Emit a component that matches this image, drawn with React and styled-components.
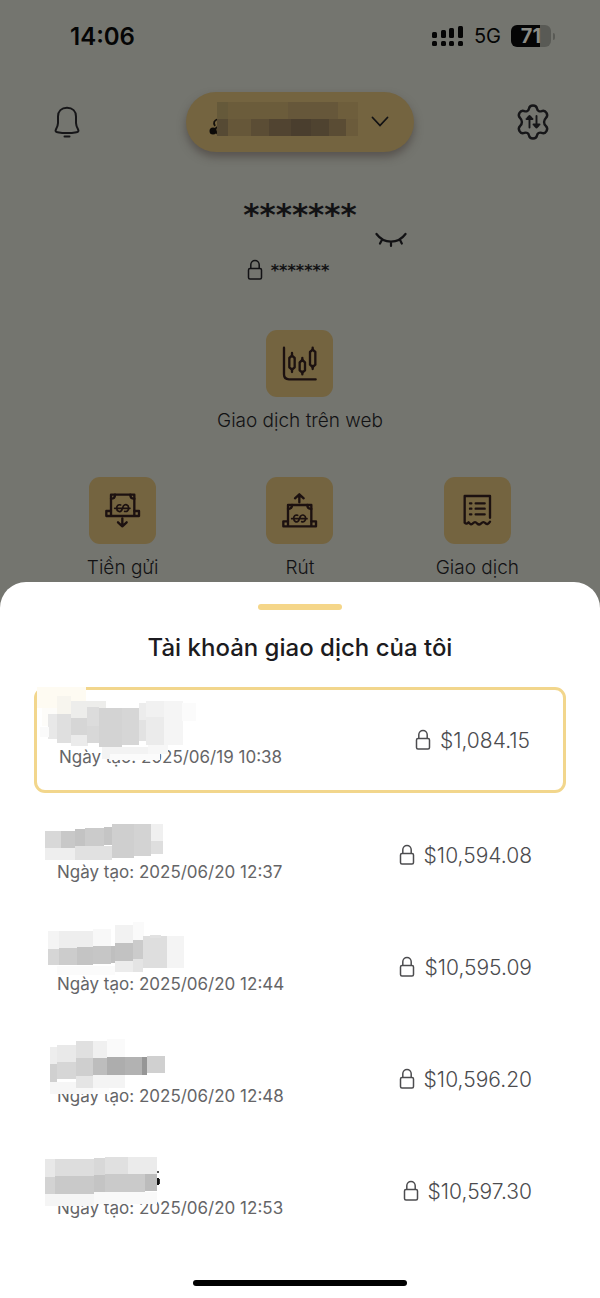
import React from 'react';
import styled, { createGlobalStyle } from 'styled-components';

const accounts = [
  {
    created: '2025/06/19 10:38',
    amount: '$1,084.15',
    selected: true,
    mask: {
      viewBox: '51 30 600 318',
      blocks: [
        [52, 22, 146, 62, '#fefbf2'],
        [66, 84, 50, 54, '#fdfcf9'],
        [112, 48, 42, 56, '#f7f5ee'],
        [154, 62, 104, 52, '#ededeb'],
        [84, 103, 30, 74, '#e8e8e8'],
        [60, 140, 26, 30, '#fafafa'],
        [112, 103, 42, 86, '#dfdfdf'],
        [154, 114, 50, 52, '#d6d6d6'],
        [154, 166, 50, 32, '#ebebeb'],
        [202, 82, 36, 56, '#dcdcdc'],
        [202, 138, 36, 50, '#d8d8d8'],
        [238, 84, 68, 116, '#d3d3d3'],
        [306, 84, 52, 110, '#d6d6d6'],
        [356, 70, 24, 50, '#ececec'],
        [356, 120, 24, 64, '#e2e2e2'],
        [378, 62, 54, 48, '#f1f1f1'],
        [378, 110, 54, 86, '#ebebeb'],
        [432, 62, 56, 134, '#f5f5f5'],
        [486, 68, 42, 54, '#fbfbfb'],
        [246, 200, 138, 36, '#f3f3f3'],
        [270, 222, 150, 18, '#fbfbfb'],
        [384, 196, 60, 26, '#f7f7f7'],
      ],
    },
  },
  {
    created: '2025/06/20 12:37',
    amount: '$10,594.08',
    mask: {
      viewBox: '12 -33 600 336',
      blocks: [
        [46, 63, 46, 50, '#d8d8d8'],
        [92, 63, 42, 51, '#c8c8c8'],
        [134, 58, 32, 53, '#c3c3c3'],
        [166, 54, 56, 54, '#cbcbcb'],
        [222, 50, 24, 54, '#c5c5c5'],
        [46, 113, 88, 38, '#eeeeee'],
        [134, 109, 112, 40, '#e1e1e1'],
        [246, 42, 66, 102, '#cfcfcf'],
        [312, 42, 50, 96, '#d3d3d3'],
        [362, 42, 38, 52, '#f0f0f0'],
        [362, 94, 38, 38, '#dedede'],
      ],
    },
  },
  {
    created: '2025/06/20 12:44',
    amount: '$10,595.09',
    mask: {
      viewBox: '12 303 600 336',
      blocks: [
        [54, 362, 34, 54, '#f4f4f4'],
        [88, 362, 102, 52, '#eeeeee'],
        [190, 356, 52, 52, '#f8f8f8'],
        [256, 346, 52, 54, '#f2f2f2'],
        [308, 336, 34, 54, '#fafafa'],
        [54, 416, 34, 50, '#d6d6d6'],
        [88, 413, 52, 52, '#cccccc'],
        [140, 412, 50, 52, '#c4c4c4'],
        [190, 408, 52, 54, '#c6c6c6'],
        [242, 408, 14, 52, '#bfbfbf'],
        [256, 400, 54, 52, '#c2c2c2'],
        [310, 391, 30, 56, '#cbcbcb'],
        [256, 452, 54, 34, '#ececec'],
        [310, 446, 30, 40, '#e4e4e4'],
        [340, 378, 70, 96, '#dedede'],
        [360, 374, 32, 10, '#e2e2e2'],
        [410, 377, 52, 96, '#f4f4f4'],
        [80, 468, 176, 26, '#fbfbfb'],
      ],
    },
  },
  {
    created: '2025/06/20 12:48',
    amount: '$10,596.20',
    mask: {
      viewBox: '12 -21 600 336',
      blocks: [
        [60, 51, 22, 52, '#ededed'],
        [82, 44, 56, 52, '#e9e9e9'],
        [138, 33, 50, 52, '#e0e0e0'],
        [188, 33, 44, 50, '#f0f0f0'],
        [232, 26, 54, 56, '#fafafa'],
        [60, 103, 22, 53, '#d0d0d0'],
        [82, 96, 56, 52, '#d6d6d6'],
        [138, 85, 50, 52, '#cfcfcf'],
        [188, 85, 44, 50, '#bdbdbd'],
        [232, 81, 54, 54, '#adadad'],
        [286, 81, 50, 54, '#b2b2b2'],
        [336, 81, 16, 54, '#969696'],
        [352, 77, 52, 53, '#d0d0d0'],
        [60, 156, 78, 36, '#f6f6f6'],
        [138, 137, 50, 38, '#e5e5e5'],
        [138, 175, 50, 16, '#f8f8f8'],
        [188, 135, 98, 38, '#f4f4f4'],
        [188, 173, 50, 18, '#fcfcfc'],
      ],
    },
  },
  {
    created: '2025/06/20 12:53',
    amount: '$10,597.30',
    mask: {
      viewBox: '12 315 600 336',
      blocks: [
        [46, 388, 30, 52, '#e8e8e8'],
        [76, 387, 116, 52, '#dddddd'],
        [192, 384, 34, 52, '#d8d8d8'],
        [226, 381, 68, 52, '#e0e0e0'],
        [294, 381, 88, 52, '#ebebeb'],
        [46, 440, 30, 52, '#d3d3d3'],
        [76, 439, 116, 52, '#c9c9c9'],
        [192, 436, 34, 52, '#c4c4c4'],
        [226, 432, 120, 54, '#cacaca'],
        [346, 432, 36, 52, '#bcbcbc'],
        [382, 423, 4, 6, '#555555'],
        [382, 444, 5, 22, '#111111'],
        [386, 448, 3, 14, '#333333'],
        [46, 492, 146, 36, '#f5f5f5'],
        [192, 487, 190, 34, '#f9f9f9'],
      ],
    },
  },
];

function Mask({ viewBox, blocks }) {
  return (
    <MaskLayer viewBox={viewBox} aria-hidden="true" shapeRendering="crispEdges">
      {blocks.map(([x, y, w, h, fill], i) => (
        <rect key={i} x={x} y={y} width={w} height={h} fill={fill} />
      ))}
    </MaskLayer>
  );
}

function LockIcon() {
  return (
    <svg width="16" height="22" viewBox="0 0 16 22" fill="none" stroke="currentColor" strokeWidth="1.5" aria-hidden="true">
      <rect x="1.5" y="9.5" width="13" height="10.5" rx="1.5" />
      <path d="M3.8 9.500V5.800a4.200 4.300 0 0 1 8.400 0V9.500" />
    </svg>
  );
}

function BellIcon() {
  return (
    <svg width="28" height="32" viewBox="0 0 28 32" fill="none" stroke="currentColor" strokeWidth="2" strokeLinecap="round" aria-hidden="true">
      <path d="M14 1.800C8.500 1.800 5 5.200 5 10.500V17c0 2.500-.8 4-2 6.200-1 1.800-.3 2.700 1.500 3 6 1.100 13 1.100 19 0 1.800-.3 2.500-1.200 1.500-3-1.200-2.200-2-3.700-2-6.200v-6.500c0-5.300-3.500-8.700-9-8.700Z" />
      <path d="M11.500 30.400h5" />
    </svg>
  );
}

function SettingsIcon() {
  return (
    <svg width="34" height="36" viewBox="0 0 34 36" fill="none" stroke="currentColor" strokeWidth="2.400" strokeLinecap="round" strokeLinejoin="round" aria-hidden="true">
      <path d="M13 4.500C13.400 2.300 14.500 1.500 17 1.500s3.600.8 4 3c.4 2.300 2.400 3.400 4.600 2.600 2.300-.9 3.600-.4 4.900 1.800s1.100 3.500-.7 5.200c-2.300 2.200-2.300 5.600 0 7.800 1.800 1.700 2 3 .7 5.200s-2.600 2.700-4.900 1.800c-2.200-.8-4.200.3-4.600 2.600-.4 2.200-1.500 3-4 3s-3.600-.8-4-3c-.4-2.300-2.400-3.400-4.600-2.600-2.300.9-3.600.4-4.900-1.800s-1.100-3.500.7-5.200c2.300-2.200 2.300-5.600 0-7.800-1.800-1.700-2-3-.7-5.200s2.600-2.700 4.900-1.800c2.200.8 4.200-.3 4.600-2.600Z" />
      <path d="M13.500 23.500V12M10.500 15h6M20.500 12v11.500M17.500 20.500h6M11.500 14l2-2 2 2M18.500 21.500l2 2 2-2" strokeWidth="1.900" />
    </svg>
  );
}

function EyeClosedIcon() {
  return (
    <svg width="32" height="16" viewBox="0 0 32 16" fill="none" stroke="currentColor" strokeWidth="2.200" strokeLinecap="round" aria-hidden="true">
      <path d="M1.500 2C9 12.200 23 12.200 30.500 2M7.200 7.500 5 11.500M16 9.800V14M24.800 7.500l2 4" />
    </svg>
  );
}

function SignalIcon() {
  return (
    <svg width="32" height="22" viewBox="0 0 32 22" fill="currentColor" aria-hidden="true">
      <rect x="0" y="7" width="5" height="6" rx="1.500" />
      <rect x="9" y="5" width="5" height="8" rx="1.500" />
      <rect x="17" y="3" width="5" height="10" rx="1.500" />
      <rect x="26" y="1" width="5" height="12" rx="1.500" />
      <rect x="0" y="16" width="5" height="5" rx="1.500" />
      <rect x="9" y="16" width="5" height="5" rx="1.500" />
      <rect x="17" y="16" width="5" height="5" rx="1.500" />
      <rect x="26" y="16" width="5" height="5" rx="1.500" />
    </svg>
  );
}

function ChartIcon() {
  return (
    <TileIcon viewBox="199 28 201 201">
      <path d="M253 81v80q0 15 15 15h80" />
      <path d="M277 97v8M277 145v9M308 112v7M308 153v8M339 81v7M339 136v9" />
      <path d="m277 105 8 7v28l-8 7-8-7v-28ZM308 118l8 7v24l-8 7-8-7v-24ZM339 87l8 7v38l-8 7-8-7V94Z" />
    </TileIcon>
  );
}

function Banknote() {
  return (
    <>
      <path d="M153 138V89h70v49" />
      <path d="M153 101q12 0 12-12M223 101q-12 0-12-12" />
      <path d="M153 138h-14v15h98v-15h-14M153 138v14M223 138v14" />
      <path d="M182 120c-7-3-12 3-12 9 0 10 9 14 15 7l5-13c6-7 16-4 16 6 0 7-5 12-12 10M164 130h46" strokeWidth="5" />
    </>
  );
}

function DepositIcon() {
  return (
    <TileIcon viewBox="87 36 201 201">
      <Banknote />
      <path d="M187 160v24M174 172l13 12 13-12" />
    </TileIcon>
  );
}

function WithdrawIcon() {
  return (
    <TileIcon viewBox="87 36 201 201">
      <g transform="translate(0 31)">
        <Banknote />
      </g>
      <path d="M187 112V88M174 100l13-12 13 12" />
    </TileIcon>
  );
}

function ReceiptIcon() {
  return (
    <TileIcon viewBox="133 36 201 201">
      <path d="M271 158V93h-76v80q6 6 12-1 7 10 13 3 6-7 12 0 7 7 13 0 6-7 13 0 6 6 13-5" />
      <path d="M211 115h4M228 115h27M211 131h4M228 131h27M211 148h4M228 148h27" />
    </TileIcon>
  );
}

function Action({ icon, label }) {
  return (
    <ActionButton type="button">
      <Tile>{icon}</Tile>
      <ActionLabel>{label}</ActionLabel>
    </ActionButton>
  );
}

function App() {
  return (
    <Screen>
      <GlobalStyle />
      <StatusBar>
        <Clock>14:06</Clock>
        <StatusIcons>
          <SignalIcon />
          <Network>5G</Network>
          <Battery>
            <BatteryBody>71</BatteryBody>
            <BatteryTip />
          </Battery>
        </StatusIcons>
      </StatusBar>

      <Header>
        <IconButton type="button" aria-label="Thông báo"><BellIcon /></IconButton>
        <AccountPicker type="button" aria-label="Chọn tài khoản">
          <svg width="150" height="42" viewBox="0 0 150 42" aria-hidden="true">
            <g fill="none" stroke="#14100c" strokeWidth="1.8">
              <path d="M9 18q-6 2-3 7M8 26q-4 3 1 7" />
            </g>
            <circle cx="4" cy="30" r="3.500" fill="#0c0a08" />
            <g shapeRendering="crispEdges">
              <rect x="8" y="1" width="11" height="17" fill="#65593a" />
              <rect x="19" y="1" width="60" height="17" fill="#6b5c3b" />
              <rect x="79" y="1" width="50" height="17" fill="#66573a" />
              <rect x="129" y="1" width="20" height="17" fill="#6e5e3c" />
              <rect x="8" y="18" width="11" height="17" fill="#564a34" />
              <rect x="19" y="18" width="23" height="17" fill="#665739" />
              <rect x="42" y="18" width="18" height="17" fill="#5b4d35" />
              <rect x="60" y="18" width="22" height="17" fill="#514431" />
              <rect x="82" y="18" width="20" height="17" fill="#4a3e2e" />
              <rect x="102" y="18" width="18" height="17" fill="#4f4330" />
              <rect x="120" y="18" width="17" height="17" fill="#5a4c34" />
              <rect x="137" y="18" width="12" height="17" fill="#6b5b3b" />
            </g>
          </svg>
          <svg width="18" height="12" viewBox="0 0 18 12" fill="none" stroke="currentColor" strokeWidth="1.8" strokeLinecap="round" aria-hidden="true">
            <path d="m1.500 1.500 7.500 8 7.500-8" />
          </svg>
        </AccountPicker>
        <IconButton type="button" aria-label="Cài đặt"><SettingsIcon /></IconButton>
      </Header>

      <Balance>
        <BalanceTotal>*******</BalanceTotal>
        <EyeButton type="button" aria-label="Hiện số dư"><EyeClosedIcon /></EyeButton>
        <BalanceLocked>
          <LockIcon />
          <LockedStars>*******</LockedStars>
        </BalanceLocked>
      </Balance>

      <Actions>
        <WideAction>
          <Action icon={<ChartIcon />} label="Giao dịch trên web" />
        </WideAction>
        <Action icon={<DepositIcon />} label="Tiền gửi" />
        <Action icon={<WithdrawIcon />} label="Rút" />
        <Action icon={<ReceiptIcon />} label="Giao dịch" />
      </Actions>

      <Sheet>
        <Handle />
        <Title>Tài khoản giao dịch của tôi</Title>
        <AccountList>
          {accounts.map((account) => (
            <li key={account.created}>
              <AccountRow type="button" $selected={account.selected}>
                <AccountInfo>
                  <AccountDate>Ngày tạo: {account.created}</AccountDate>
                </AccountInfo>
                <Amount>
                  <LockIcon />
                  {account.amount}
                </Amount>
                <Mask {...account.mask} />
              </AccountRow>
            </li>
          ))}
        </AccountList>
        <HomeIndicator />
      </Sheet>
    </Screen>
  );
}

const GlobalStyle = createGlobalStyle`
  * {
    box-sizing: border-box;
  }

  body {
    margin: 0;
    background-color: #74756f;
    font-family: 'Inter', 'Liberation Sans', sans-serif;
  }

  button {
    margin: 0;
    padding: 0;
    border: none;
    background: none;
    color: inherit;
    font: inherit;
    cursor: pointer;
  }

  svg {
    display: block;
    flex-shrink: 0;
  }
`

const Screen = styled.div`
  display: flex;
  flex-direction: column;
  min-height: 100vh;
  background-color: #74756f;
  color: #121214;
`

const StatusBar = styled.div`
  display: flex;
  justify-content: space-between;
  align-items: center;
  height: 72px;
  padding: 0 45px 0 70px;
  color: #050505;
`

const Clock = styled.span`
  font-size: 24px;
  font-weight: 600;
`

const StatusIcons = styled.div`
  display: flex;
  align-items: center;
  gap: 10px;
`

const Network = styled.span`
  font-size: 20px;
`

const Battery = styled.div`
  display: flex;
  align-items: center;
  gap: 2px;
`

const BatteryBody = styled.div`
  width: 40px;
  height: 22px;
  border-radius: 6px;
  background: linear-gradient(to right, #050505 72%, #595a55 72%);
  color: #8b8c86;
  font-size: 20px;
  font-weight: 700;
  line-height: 22px;
  text-align: center;
`

const BatteryTip = styled.div`
  width: 2px;
  height: 7px;
  border-radius: 0 2px 2px 0;
  background-color: #595a55;
`

const Header = styled.header`
  display: flex;
  justify-content: space-between;
  align-items: center;
  height: 100px;
  padding: 0 50px;
`

const IconButton = styled.button`
  display: flex;
  justify-content: center;
  width: 34px;
  color: #161618;
`

const AccountPicker = styled.button`
  display: flex;
  align-items: center;
  justify-content: space-between;
  width: 228px;
  height: 60px;
  padding: 0 25px 0 23px;
  border-radius: 30px;
  background-color: #746440;
  box-shadow: 0 5px 8px rgba(60, 50, 45, 0.5);
`

const Balance = styled.section`
  display: flex;
  flex-direction: column;
  align-items: center;
  padding-top: 26px;
`

const BalanceTotal = styled.div`
  height: 32px;
  font-family: 'DejaVu Sans', sans-serif;
  font-size: 31px;
  font-weight: 700;
  line-height: 32px;
`

const EyeButton = styled.button`
  height: 20px;
  margin-left: 181px;
`

const BalanceLocked = styled.div`
  display: flex;
  align-items: center;
  gap: 8px;
  height: 40px;
  margin-right: 24px;
`

const LockedStars = styled.span`
  font-family: 'DejaVu Sans', sans-serif;
  font-size: 16px;
  font-weight: 700;
`

const Actions = styled.nav`
  display: grid;
  grid-template-columns: repeat(3, 1fr);
  row-gap: 44px;
  padding: 40px 34px 0;
`

const WideAction = styled.div`
  grid-column: 1 / -1;
  display: flex;
  justify-content: center;
`

const ActionButton = styled.button`
  display: flex;
  flex-direction: column;
  align-items: center;
  gap: 12px;
`

const Tile = styled.span`
  display: block;
  width: 67px;
  height: 67px;
  border-radius: 11px;
  background-color: #746440;
`

const TileIcon = styled.svg.attrs({ 'aria-hidden': true })`
  width: 67px;
  height: 67px;
  fill: none;
  stroke: #1c1110;
  stroke-width: 7px;
  stroke-linecap: round;
  stroke-linejoin: round;
`

const ActionLabel = styled.span`
  font-size: 19px;
  font-weight: 300;
  line-height: 24px;
`

const Sheet = styled.main`
  display: flex;
  flex: 1;
  flex-direction: column;
  align-items: center;
  margin-top: 2px;
  padding: 22px 34px 12px;
  border-radius: 26px 26px 0 0;
  background-color: #ffffff;
`

const Handle = styled.div`
  width: 84px;
  height: 6px;
  border-radius: 3px;
  background-color: #f5d689;
`

const Title = styled.h1`
  margin: 22px 0 23px;
  color: #1c1b20;
  font-size: 24px;
  font-weight: 500;
  line-height: 32px;
  text-align: center;
`

const AccountList = styled.ul`
  width: 100%;
  margin: 0;
  padding: 0;
  list-style: none;
`

const AccountRow = styled.button`
  position: relative;
  display: flex;
  justify-content: space-between;
  align-items: center;
  width: 100%;
  height: ${props => props.$selected ? '106px' : '112px'};
  margin-bottom: ${props => props.$selected ? '6px' : '0'};
  padding: ${props => props.$selected ? '0 33px 0 22px' : '0 34px 0 23px'};
  border: ${props => props.$selected ? '3px solid #f2d68c' : 'none'};
  border-radius: 11px;
`

const AccountInfo = styled.span`
  display: flex;
  align-items: flex-end;
  height: 58px;
`

const AccountDate = styled.span`
  color: #656567;
  font-size: 17px;
  font-weight: 400;
  line-height: 24px;
`

const Amount = styled.span`
  display: flex;
  align-items: center;
  gap: 9px;
  color: #4c4c4f;
  font-size: 21px;
  font-weight: 300;
`

const MaskLayer = styled.svg`
  position: absolute;
  top: 0;
  left: 0;
  width: 200px;
  overflow: visible;
`

const HomeIndicator = styled.div`
  width: 214px;
  height: 6px;
  margin-top: auto;
  border-radius: 3px;
  background-color: #000000;
`

export default App;
